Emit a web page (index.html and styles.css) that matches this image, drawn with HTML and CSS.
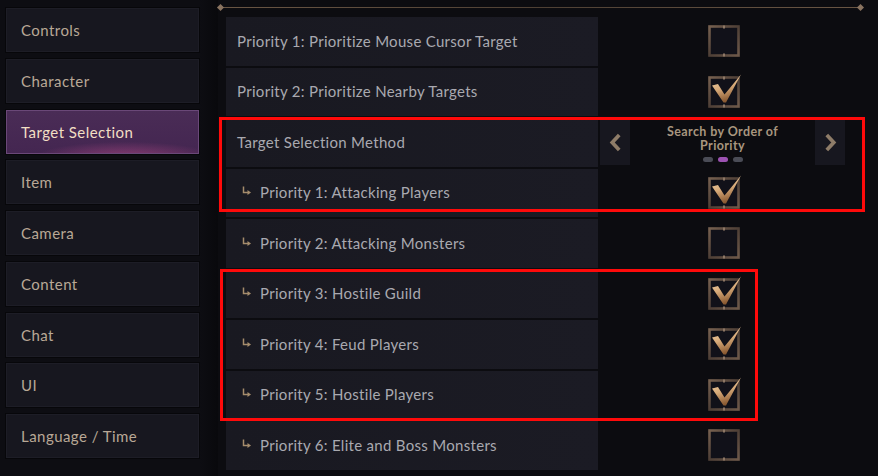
FILE: index.html
```html
<!DOCTYPE html>
<html lang="en">
<head>
<meta charset="utf-8">
<title>Settings - Target Selection</title>
<link rel="stylesheet" href="styles.css">
</head>
<body>
<div class="app">
  <nav class="sidebar">
    <div class="nav-btn">Controls</div>
    <div class="nav-btn">Character</div>
    <div class="nav-btn active">Target Selection</div>
    <div class="nav-btn">Item</div>
    <div class="nav-btn">Camera</div>
    <div class="nav-btn">Content</div>
    <div class="nav-btn">Chat</div>
    <div class="nav-btn">UI</div>
    <div class="nav-btn">Language / Time</div>
  </nav>
  <main class="main">
    <div class="topline"><span class="diamond left"></span><span class="diamond right"></span></div>
    <div class="rows">
      <div class="row">
        <div class="label">Priority 1: Prioritize Mouse Cursor Target</div>
        <div class="value"><svg class="cb" viewBox="-3 -3 38 38"><use href="#box"/></svg></div>
      </div>
      <div class="row">
        <div class="label">Priority 2: Prioritize Nearby Targets</div>
        <div class="value"><svg class="cb" viewBox="-3 -3 38 38"><use href="#box"/><use href="#check"/></svg></div>
      </div>
      <div class="row">
        <div class="label">Target Selection Method</div>
        <div class="value selector">
          <div class="arrow-btn"><svg viewBox="0 0 14 20" class="chev"><path d="M11 2 L3.5 10 L11 18" /></svg></div>
          <div class="sel-center">
            <div class="sel-text">Search by Order of<br>Priority</div>
            <div class="dots"><span class="dot"></span><span class="dot on"></span><span class="dot"></span></div>
          </div>
          <div class="arrow-btn"><svg viewBox="0 0 14 20" class="chev"><path d="M3 2 L10.5 10 L3 18" /></svg></div>
        </div>
      </div>
      <div class="row">
        <div class="label sub"><svg class="sub-arrow" viewBox="0 0 10 10"><path d="M1.5 0.5 V6.5 H6" /><polygon points="5.5,4 9,6.5 5.5,9" /></svg>Priority 1: Attacking Players</div>
        <div class="value"><svg class="cb" viewBox="-3 -3 38 38"><use href="#box"/><use href="#check"/></svg></div>
      </div>
      <div class="row">
        <div class="label sub"><svg class="sub-arrow" viewBox="0 0 10 10"><path d="M1.5 0.5 V6.5 H6" /><polygon points="5.5,4 9,6.5 5.5,9" /></svg>Priority 2: Attacking Monsters</div>
        <div class="value"><svg class="cb" viewBox="-3 -3 38 38"><use href="#box"/></svg></div>
      </div>
      <div class="row">
        <div class="label sub"><svg class="sub-arrow" viewBox="0 0 10 10"><path d="M1.5 0.5 V6.5 H6" /><polygon points="5.5,4 9,6.5 5.5,9" /></svg>Priority 3: Hostile Guild</div>
        <div class="value"><svg class="cb" viewBox="-3 -3 38 38"><use href="#box"/><use href="#check"/></svg></div>
      </div>
      <div class="row">
        <div class="label sub"><svg class="sub-arrow" viewBox="0 0 10 10"><path d="M1.5 0.5 V6.5 H6" /><polygon points="5.5,4 9,6.5 5.5,9" /></svg>Priority 4: Feud Players</div>
        <div class="value"><svg class="cb" viewBox="-3 -3 38 38"><use href="#box"/><use href="#check"/></svg></div>
      </div>
      <div class="row">
        <div class="label sub"><svg class="sub-arrow" viewBox="0 0 10 10"><path d="M1.5 0.5 V6.5 H6" /><polygon points="5.5,4 9,6.5 5.5,9" /></svg>Priority 5: Hostile Players</div>
        <div class="value"><svg class="cb" viewBox="-3 -3 38 38"><use href="#box"/><use href="#check"/></svg></div>
      </div>
      <div class="row">
        <div class="label sub"><svg class="sub-arrow" viewBox="0 0 10 10"><path d="M1.5 0.5 V6.5 H6" /><polygon points="5.5,4 9,6.5 5.5,9" /></svg>Priority 6: Elite and Boss Monsters</div>
        <div class="value"><svg class="cb" viewBox="-3 -3 38 38"><use href="#box"/></svg></div>
      </div>
    </div>
    <div class="highlight hl-1"></div>
    <div class="highlight hl-2"></div>
  </main>
</div>

<svg class="defs" width="0" height="0" aria-hidden="true">
  <defs>
    <linearGradient id="frame" x1="0" y1="0" x2="1" y2="1">
      <stop offset="0" stop-color="#76604f"/>
      <stop offset="0.5" stop-color="#4e3f36"/>
      <stop offset="1" stop-color="#6e594a"/>
    </linearGradient>
    <linearGradient id="gold" x1="0" y1="0" x2="0.3" y2="1">
      <stop offset="0" stop-color="#f6dcb4"/>
      <stop offset="0.55" stop-color="#d6a978"/>
      <stop offset="1" stop-color="#8a5a32"/>
    </linearGradient>
    <g id="box">
      <rect x="1.5" y="1.5" width="29" height="29" fill="#111119" stroke="url(#frame)" stroke-width="2.6"/>
      <rect x="15" y="0.5" width="2" height="3" fill="#8e7866"/>
      <rect x="15" y="28.5" width="2" height="3" fill="#8e7866"/>
    </g>
    <g id="check">
      <polygon points="4,9.5 10,8 16.5,18.5 33,-1.5 18,26.5 15.5,26.5" fill="url(#gold)"/>
    </g>
  </defs>
</svg>
</body>
</html>
```

FILE: styles.css
```css
* { box-sizing: border-box; }

html, body {
  margin: 0;
  padding: 0;
  width: 878px;
  height: 476px;
  overflow: hidden;
  background: #0c0c10;
  font-family: "Lato", "Noto Sans", sans-serif;
}

.app {
  display: flex;
  height: 476px;
}

.sidebar {
  width: 218px;
  flex: none;
  padding: 8px 0 0 6px;
  display: flex;
  flex-direction: column;
  gap: 6.75px;
  background: linear-gradient(90deg, #0d0d12 0, #0d0d12 200px, #09090c 218px);
}

.nav-btn {
  width: 193px;
  height: 44px;
  background: #17171f;
  border: 1px solid #1d1d26;
  outline: 1px solid #07070a;
  color: #b9a896;
  font-size: 15px;
  display: flex;
  align-items: center;
  padding-left: 14px;
  letter-spacing: 0.45px;
}

.nav-btn.active {
  background:
    radial-gradient(ellipse 70% 60% at 62% 115%, rgba(200, 80, 145, 0.6), rgba(200, 80, 145, 0) 70%),
    linear-gradient(180deg, #4a2c56 0%, #442651 100%);
  border: 1px solid #6a4878;
  color: #f2dfc4;
}

.main {
  position: relative;
  flex: 1;
  background: #0c0c10;
}

.topline {
  position: relative;
  margin-top: 7px;
  width: 645px;
  height: 1px;
  background: linear-gradient(90deg, #6a5644, #4e4034 50%, #6a5644);
}

.diamond {
  position: absolute;
  top: -2px;
  width: 5px;
  height: 5px;
  background: #8a7460;
  transform: rotate(45deg);
}
.diamond.left { left: 0; }
.diamond.right { right: 0; }

.rows {
  margin-top: 9px;
  margin-left: 8px;
  display: flex;
  flex-direction: column;
  gap: 2px;
}

.row {
  display: flex;
  height: 48.5px;
}

.label {
  width: 372px;
  flex: none;
  background: linear-gradient(90deg, #191921, #1b1b24);
  color: #a9a9b0;
  font-size: 15px;
  letter-spacing: 0.3px;
  display: flex;
  align-items: center;
  padding-left: 11px;
  padding-bottom: 1px;
}

.label.sub {
  padding-left: 16px;
}

.sub-arrow {
  width: 10px;
  height: 10px;
  margin-right: 8px;
  margin-top: -2px;
}
.sub-arrow path {
  fill: none;
  stroke: #a58c6c;
  stroke-width: 1.5;
}
.sub-arrow polygon {
  fill: #a58c6c;
}

.value {
  width: 250px;
  flex: none;
  display: flex;
  align-items: center;
  justify-content: center;
  padding-left: 1px;
}

.cb {
  width: 38px;
  height: 38px;
}

.selector {
  justify-content: space-between;
  padding: 2px 3px 2px 2px;
  align-items: stretch;
}

.arrow-btn {
  width: 30px;
  background: #17171f;
  display: flex;
  align-items: center;
  justify-content: center;
}

.chev {
  width: 13px;
  height: 19px;
}
.chev path {
  fill: none;
  stroke: #8e7c68;
  stroke-width: 4;
  stroke-linejoin: miter;
}

.sel-center {
  flex: 1;
  display: flex;
  flex-direction: column;
  align-items: center;
  justify-content: center;
  padding-top: 2px;
}

.sel-text {
  color: #a8967f;
  font-size: 12.5px;
  font-weight: 700;
  letter-spacing: 0.4px;
  line-height: 14px;
  text-align: center;
}

.dots {
  display: flex;
  gap: 5px;
  margin-top: 4px;
}
.dot {
  width: 10px;
  height: 5px;
  border-radius: 3px;
  background: #4a4c56;
}
.dot.on {
  background: #9c52b2;
}

.highlight {
  position: absolute;
  border: 3px solid #ff0a0a;
}
.hl-1 {
  left: 1px;
  top: 117px;
  width: 646px;
  height: 95px;
}
.hl-2 {
  left: 2px;
  top: 269px;
  width: 538px;
  height: 152px;
}

.defs {
  position: absolute;
  width: 0;
  height: 0;
}
```
